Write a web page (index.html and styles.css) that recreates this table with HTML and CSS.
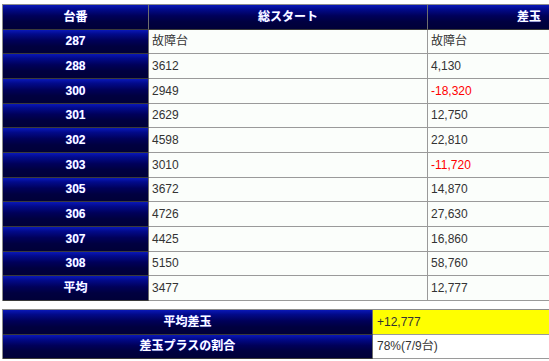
FILE: index.html
```html
<!DOCTYPE html>
<html lang="ja">
<head>
<meta charset="utf-8">
<title>台番データ</title>
<link rel="stylesheet" href="styles.css">
</head>
<body>
<div class="page">
  <table class="data">
    <colgroup><col class="c1"><col class="c2"><col class="c3"></colgroup>
    <tr><th>台番</th><th>総スタート</th><th>差玉</th></tr>
    <tr><th>287</th><td>故障台</td><td>故障台</td></tr>
    <tr><th>288</th><td>3612</td><td>4,130</td></tr>
    <tr><th>300</th><td>2949</td><td class="neg">-18,320</td></tr>
    <tr><th>301</th><td>2629</td><td>12,750</td></tr>
    <tr><th>302</th><td>4598</td><td>22,810</td></tr>
    <tr><th>303</th><td>3010</td><td class="neg">-11,720</td></tr>
    <tr><th>305</th><td>3672</td><td>14,870</td></tr>
    <tr><th>306</th><td>4726</td><td>27,630</td></tr>
    <tr><th>307</th><td>4425</td><td>16,860</td></tr>
    <tr><th>308</th><td>5150</td><td>58,760</td></tr>
    <tr><th>平均</th><td>3477</td><td>12,777</td></tr>
  </table>
  <table class="summary">
    <colgroup><col class="s1"><col class="s2"></colgroup>
    <tr><th>平均差玉</th><td class="hl">+12,777</td></tr>
    <tr><th>差玉プラスの割合</th><td class="plain">78%(7/9台)</td></tr>
  </table>
</div>
</body>
</html>
```
FILE: styles.css
```css
html, body {
  margin: 0;
  padding: 0;
  overflow: hidden;
  background: #ffffff;
}
.page {
  padding: 4px 0 0 2px;
  width: 640px;
  display: flex;
  flex-direction: column;
  gap: 8px;
  font-family: "Liberation Sans", "Noto Sans CJK JP", sans-serif;
  font-size: 12px;
}
table {
  border-collapse: separate;
  border-spacing: 0;
  border-top: 1px solid #8c8c8c;
  border-left: 1px solid #8c8c8c;
  table-layout: fixed;
}
.data { width: 628px; }
.summary { width: 628px; }
.c1 { width: 146px; }
.c2 { width: 279px; }
.c3 { width: 203px; }
.s1 { width: 370px; }
.s2 { width: 258px; }
th, td {
  height: 23.67px;
  padding: 0 3px;
  box-sizing: content-box;
  line-height: 14px;
  vertical-align: middle;
}
th {
  color: #ffffff;
  font-weight: bold;
  text-align: center;
  background: linear-gradient(to bottom, #0a18b8 0%, #020a8a 18%, #00005a 45%, #000040 70%, #000038 100%);
  border-right: 1px solid #6e6e6e;
  border-bottom: 1px solid #3a3a3a;
  text-shadow: 0 0 1px #3040ff;
}
td {
  color: #333333;
  text-align: left;
  background: #fbfefb;
  border-right: 1px solid #9a9a9a;
  border-bottom: 1px solid #9a9a9a;
}
td.neg { color: #ff0000; }
td.hl { background: #ffff00; padding-left: 4px; }
td.plain { background: #ffffff; padding-left: 4px; }
```
